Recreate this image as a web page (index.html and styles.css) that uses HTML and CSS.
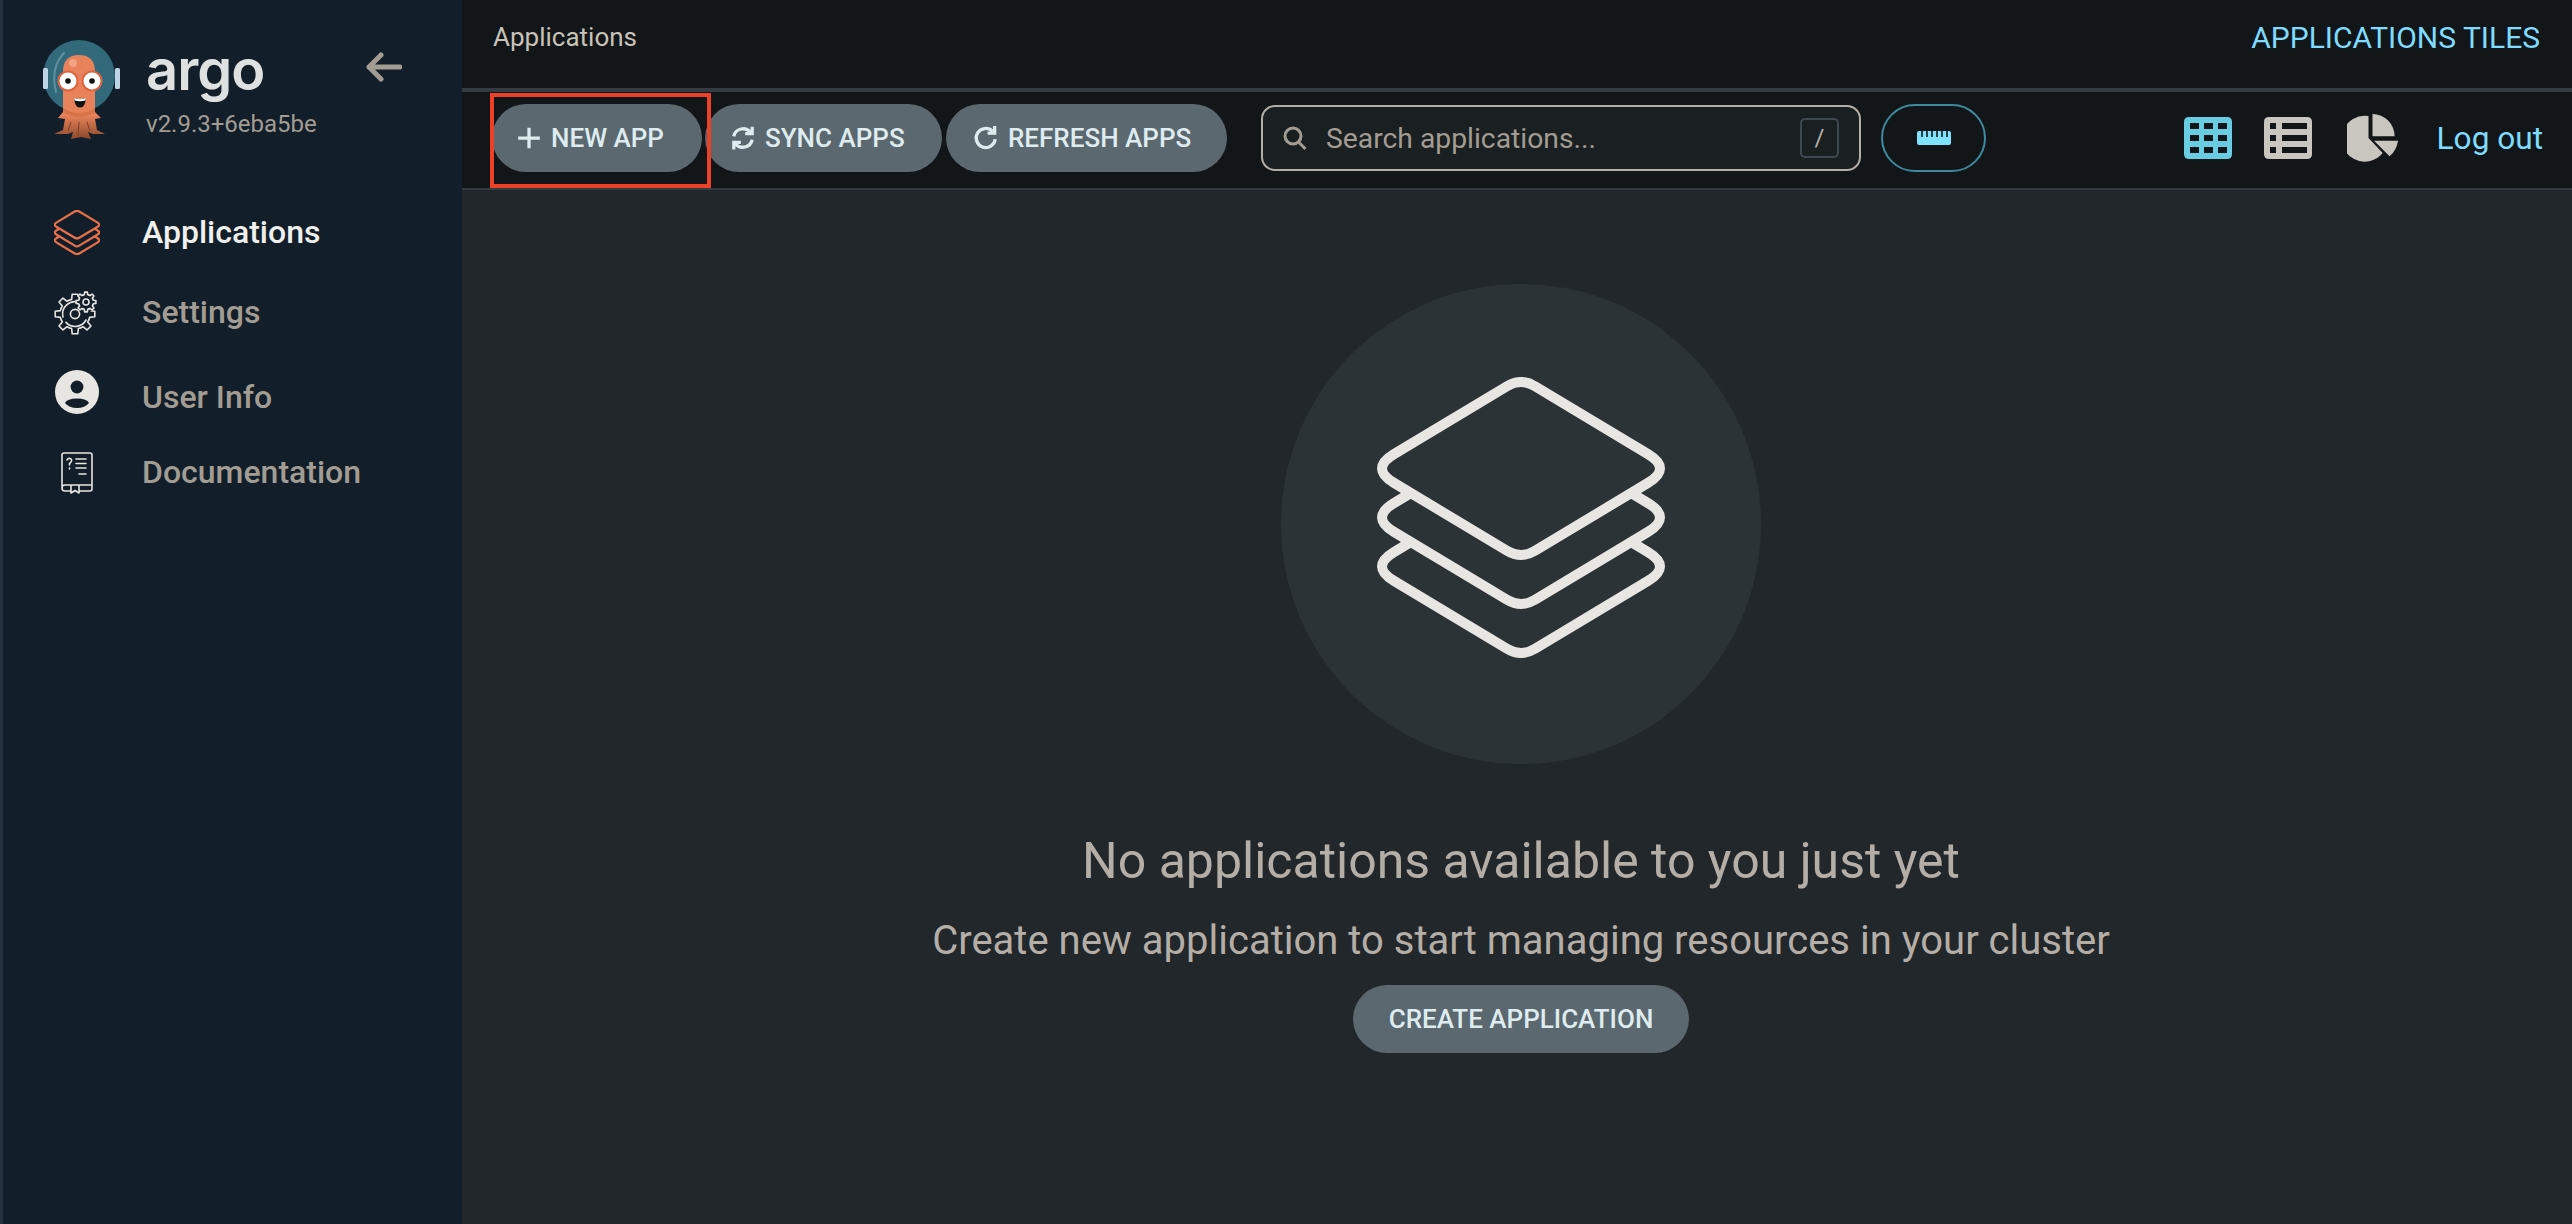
FILE: index.html
```html
<!DOCTYPE html>
<html>
    <head>
        <title>Applications</title>
        <link rel="stylesheet" href="styles.css">
    </head>
    <body>
        <svg class="defs" width="0" height="0">
            <symbol id="stack" viewBox="0 0 288 281" overflow="visible">
                <path d="M130 9.200Q144 .8 158 9.200L271 77.100Q295 91.500 271 105.900L158 173.800Q144 182.200 130 173.800L17 105.900Q-7 91.500 17 77.100Z"/>
                <path d="M34 115.900L17 126.100Q-7 140.500 17 154.900L130 222.800Q144 231.200 158 222.800L271 154.900Q295 140.500 271 126.100L254 115.900"/>
                <path d="M34 164.900L17 175.100Q-7 189.500 17 203.900L130 271.800Q144 280.200 158 271.800L271 203.900Q295 189.500 271 175.100L254 164.900"/>
            </symbol>
            <g id="gear-tooth">
                <path d="M-5.74 -13.86L-3.37 -14.6L-2.78 -19.8L2.78 -19.8L3.37 -14.6L5.74 -13.86"/>
            </g>
            <g id="gear-ring">
                <use href="#gear-tooth"/>
                <use href="#gear-tooth" transform="rotate(45)"/>
                <use href="#gear-tooth" transform="rotate(90)"/>
                <use href="#gear-tooth" transform="rotate(135)"/>
                <use href="#gear-tooth" transform="rotate(180)"/>
                <use href="#gear-tooth" transform="rotate(225)"/>
                <use href="#gear-tooth" transform="rotate(270)"/>
                <use href="#gear-tooth" transform="rotate(315)"/>
            </g>
            <linearGradient id="tentacle" x1="0" y1="0" x2="0" y2="1">
                <stop offset="0.72" stop-color="#e8825a"/>
                <stop offset="1" stop-color="#8a4a2c"/>
            </linearGradient>
        </svg>

        <div class="sidebar">
            <div class="brand">
                <svg class="logo" viewBox="0 0 80 102">
                    <circle cx="38" cy="36" r="36" fill="#326a7c"/>
                    <path d="M23 13Q9 28 15 52" fill="none" stroke="#5f8f9e" stroke-width="2" stroke-linecap="round"/>
                    <rect x="2" y="28" width="5" height="21" rx="1.500" fill="#bcd3e8"/>
                    <rect x="74" y="28" width="5" height="21" rx="1.500" fill="#bcd3e8"/>
                    <path d="M22 72V32Q22 15 38 15Q54 15 54 32V72L60 78L54 79L56 90L64 94L52 94L47 92L50 99L40 97L30 99L32 92L27 94L13 94L22 90L24 79L17 78Z" fill="url(#tentacle)"/>
                    <path d="M22 68Q38 78 54 68V72Q38 82 22 72Z" fill="#d87248"/>
                    <path d="M30 82L27 91M38 82L37 96M46 82L49 91" fill="none" stroke="#7d4026" stroke-width="1"/>
                    <circle cx="32" cy="23" r="4" fill="#f0a283"/>
                    <circle cx="27" cy="41" r="10.500" fill="#e0623e"/>
                    <circle cx="51" cy="41" r="10.500" fill="#e0623e"/>
                    <circle cx="27" cy="41" r="8.500" fill="#fff"/>
                    <circle cx="51" cy="41" r="8.500" fill="#fff"/>
                    <circle cx="27" cy="41" r="2.800" fill="#111"/>
                    <circle cx="51" cy="41" r="2.800" fill="#111"/>
                    <path d="M33 58Q39 60 45 58Q44 68 39 67.500Q34 68 33 58Z" fill="#111"/>
                    <path d="M33 58Q39 60 45 58L44.400 60.500Q39 62 33.600 60.500Z" fill="#fff"/>
                </svg>
                <div class="brand-text">
                    <div class="wordmark">argo</div>
                    <div class="version">v2.9.3+6eba5be</div>
                </div>
                <svg class="collapse" viewBox="0 0 36 30">
                    <path d="M34 15H3M15 3L3 15L15 27"/>
                </svg>
            </div>
            <div class="nav">
                <div class="nav-item nav-active">
                    <span class="nav-icon"><svg class="stack-small"><use href="#stack"/></svg></span>
                    <span>Applications</span>
                </div>
                <div class="nav-item nav-settings">
                    <span class="nav-icon">
                        <svg class="gear" viewBox="0 0 48 46">
                            <g transform="translate(22 25)">
                                <use href="#gear-ring"/>
                                <path d="M-12 3A12.300 12.300 0 0 1 4 -11.600"/>
                                <path d="M11 6A12.300 12.300 0 0 1 -9 8.400"/>
                                <circle r="4.600"/>
                            </g>
                            <circle class="gear-cut" cx="33" cy="13" r="10.500"/>
                            <g transform="translate(33 13) scale(0.5)">
                                <use href="#gear-ring" stroke-width="3.200"/>
                            </g>
                            <circle cx="33" cy="13" r="3"/>
                        </svg>
                    </span>
                    <span>Settings</span>
                </div>
                <div class="nav-item nav-user">
                    <span class="nav-icon user-icon">
                        <svg width="44" height="44" viewBox="0 0 44 44">
                            <circle cx="22" cy="22" r="22" fill="#e8e6e2"/>
                            <circle cx="22" cy="17" r="6.400" fill="#121f2a"/>
                            <path d="M10 33Q12 28.500 22 28.500Q32 28.500 34 33Q30 38 22 38Q14 38 10 33Z" fill="#121f2a"/>
                        </svg>
                    </span>
                    <span>User Info</span>
                </div>
                <div class="nav-item nav-docs">
                    <span class="nav-icon">
                        <svg class="doc" viewBox="0 0 32 42">
                            <path d="M1 36V3Q1 1 3 1H29Q31 1 31 3V37Q31 39 29 39H18M9 39H4Q1 39 1 36Q1 33 4 33H31M18 33V41L14 38.500L10 41V33"/>
                            <path d="M6 8Q7 6 9 6.500Q11 7 10.500 9Q10 10.500 8.500 11.500V13M8.500 16V17M15 7H25M15 11.500H25M15 16H25M18 22H25"/>
                        </svg>
                    </span>
                    <span>Documentation</span>
                </div>
            </div>
        </div>

        <div class="main">
            <div class="topbar">
                <div class="page-title">Applications</div>
                <div class="page-tools">APPLICATIONS TILES</div>
            </div>
            <div class="toolbar">
                <div class="highlight"></div>
                <button class="btn btn-new">
                    <svg class="btn-icon" viewBox="0 0 24 24"><path d="M12 2.500V21.500M2 12H22"/></svg>
                    NEW APP
                </button>
                <button class="btn btn-sync">
                    <svg class="btn-icon" viewBox="0 0 24 24"><path d="M3.500 10.500A8.700 8.700 0 0 1 19 7M20.500 1.500V8H14M20.500 13.500A8.700 8.700 0 0 1 5 17M3.500 22.500V16H10"/></svg>
                    SYNC APPS
                </button>
                <button class="btn btn-refresh">
                    <svg class="btn-icon" viewBox="0 0 24 24"><path d="M20.500 13A8.800 8.800 0 1 1 18 5.800M20 1V7.500H13.500"/></svg>
                    REFRESH APPS
                </button>
                <div class="search">
                    <svg class="search-icon" viewBox="0 0 24 24"><circle cx="10" cy="10" r="8"/><path d="M15.500 16L22.500 23"/></svg>
                    <input class="search-input" placeholder="Search applications...">
                    <span class="search-key">/</span>
                </div>
                <button class="filter-btn">
                    <svg width="34" height="16" viewBox="0 0 34 16">
                        <rect y="1" width="34" height="14" rx="2" fill="#7fe3ff"/>
                        <path d="M5 0V7M10 0V7M15 0V7M20 0V7M25 0V7M30 0V7" stroke="#121619" stroke-width="1.600"/>
                    </svg>
                </button>
                <div class="toolbar-right">
                    <svg class="view-icon view-on" width="48" height="42" viewBox="0 0 48 42">
                        <path fill-rule="evenodd" d="M5 0H43Q48 0 48 5V37Q48 42 43 42H5Q0 42 0 37V5Q0 0 5 0ZM6 6V12H15V6ZM20 6V12H29V6ZM34 6V12H43V6ZM6 18V24H15V18ZM20 18V24H29V18ZM34 18V24H43V18ZM6 30V36H15V30ZM20 30V36H29V30ZM34 30V36H43V30Z"/>
                    </svg>
                    <svg class="view-icon" width="48" height="42" viewBox="0 0 48 42">
                        <path fill-rule="evenodd" d="M5 0H43Q48 0 48 5V37Q48 42 43 42H5Q0 42 0 37V5Q0 0 5 0ZM6 6V12H12V6ZM18 6V12H43V6ZM6 18V24H12V18ZM18 18V24H43V18ZM6 30V36H12V30ZM18 30V36H43V30Z"/>
                    </svg>
                    <svg class="view-icon pie-icon" width="52" height="50" viewBox="0 0 52 50">
                        <path d="M21.500 3V25L35.700 40A23 23 0 1 1 21.500 3Z"/>
                        <path d="M25.500 1V23.300H47.600A22.300 22.300 0 0 0 25.500 1Z"/>
                        <path d="M27 27.700H51A24 24 0 0 1 42.500 43.300Z"/>
                    </svg>
                    <span class="logout">Log out</span>
                </div>
            </div>
            <div class="empty">
                <div class="empty-circle">
                    <svg class="stack-large"><use href="#stack"/></svg>
                </div>
                <div class="empty-title">No applications available to you just yet</div>
                <div class="empty-sub">Create new application to start managing resources in your cluster</div>
                <button class="btn btn-create">CREATE APPLICATION</button>
            </div>
        </div>
    </body>
</html>
```

FILE: styles.css
```css
* {
    box-sizing: border-box;
}
html, body {
    margin: 0;
    height: 100%;
}
body {
    display: flex;
    height: 1224px;
    overflow: hidden;
    font-family: Roboto, "Liberation Sans", sans-serif;
    background-color: #22272b;
}
.defs {
    position: absolute;
}

/* sidebar */
.sidebar {
    width: 462px;
    flex-shrink: 0;
    background-color: #121f2a;
    border-left: 3px solid #24323f;
}
.brand {
    display: flex;
    height: 190px;
    padding: 40px 0 0 38px;
}
.logo {
    width: 80px;
    height: 102px;
    flex-shrink: 0;
}
.brand-text {
    margin-left: 25px;
    width: 220px;
}
.wordmark {
    font-family: Inter, sans-serif;
    font-size: 56px;
    font-weight: 600;
    letter-spacing: -1px;
    line-height: 60px;
    color: #dfe1e1;
}
.version {
    margin-top: 9px;
    font-size: 24px;
    line-height: 30px;
    color: #a39c92;
}
.collapse {
    width: 36px;
    height: 30px;
    margin-top: 12px;
    fill: none;
    stroke: #a39c92;
    stroke-width: 5;
    stroke-linecap: round;
    stroke-linejoin: round;
}
.nav-item {
    display: flex;
    align-items: center;
    height: 80px;
    font-size: 32px;
    font-weight: 500;
    color: #a39c92;
}
.nav-active {
    color: #f0efec;
    margin-top: 2px;
}
.nav-settings {
    margin-top: 0;
}
.nav-user {
    margin-top: 5px;
}
.nav-docs {
    margin-top: -5px;
}
.nav-icon {
    display: flex;
    justify-content: center;
    width: 139px;
    padding-left: 9px;
}
.user-icon {
    margin-bottom: 10px;
}
.stack-small {
    width: 46px;
    height: 45px;
    fill: none;
    stroke: #e8704a;
    stroke-width: 14;
}
.gear {
    width: 48px;
    height: 46px;
    fill: none;
    stroke: #e8e6e2;
    stroke-width: 1.6;
    stroke-linejoin: round;
    stroke-linecap: round;
}
.gear-cut {
    fill: #121f2a;
    stroke: none;
}
.doc {
    width: 32px;
    height: 42px;
    margin-top: 2px;
    fill: none;
    stroke: #e8e6e2;
    stroke-width: 1.6;
    stroke-linecap: round;
    stroke-linejoin: round;
}

/* header rows */
.main {
    flex: 1;
    min-width: 0;
}
.topbar {
    display: flex;
    justify-content: space-between;
    align-items: center;
    height: 92px;
    padding: 0 32px 14px 31px;
    background-color: #121619;
    border-bottom: 4px solid #333c42;
}
.page-title {
    font-size: 26px;
    color: #c9c2b8;
}
.page-tools {
    font-size: 30px;
    color: #7fdcff;
}
.toolbar {
    position: relative;
    display: flex;
    height: 98px;
    padding: 12px 29px 0 30px;
    background-color: #121619;
    border-bottom: 2px solid #333c42;
}
.highlight {
    position: absolute;
    left: 28px;
    top: 1px;
    width: 221px;
    height: 95px;
    border: 4px solid #ec4126;
}
.btn {
    display: flex;
    align-items: center;
    height: 68px;
    border: none;
    border-radius: 34px;
    font-family: inherit;
    font-size: 26px;
    font-weight: 500;
    color: #dfecef;
    background-color: #5b6870;
}
.btn-icon {
    width: 26px;
    height: 26px;
    margin-right: 9px;
    fill: none;
    stroke: #dfecef;
    stroke-width: 3;
}
.btn-new {
    width: 210px;
    padding-left: 24px;
    margin-right: 3px;
}
.btn-sync {
    width: 237px;
    padding-left: 25px;
    margin-right: 4px;
}
.btn-refresh {
    width: 281px;
    padding-left: 27px;
    margin-right: 34px;
}
.search {
    display: flex;
    align-items: center;
    width: 600px;
    height: 66px;
    margin-top: 1px;
    margin-right: 20px;
    padding: 0 20px;
    background-color: #1a1f22;
    border: 2px solid #b5aea6;
    border-radius: 14px;
}
.search-icon {
    width: 24px;
    height: 24px;
    flex-shrink: 0;
    fill: none;
    stroke: #a39c92;
    stroke-width: 3;
}
.search-input {
    flex: 1;
    min-width: 0;
    margin-left: 19px;
    padding: 0;
    border: none;
    outline: none;
    font-family: inherit;
    font-size: 28.3px;
    color: #a39c92;
    background: transparent;
}
.search-input::placeholder {
    color: #a39c92;
    opacity: 1;
}
.search-key {
    width: 39px;
    height: 40px;
    border: 2px solid #3d4850;
    border-radius: 5px;
    font-size: 24px;
    line-height: 36px;
    text-align: center;
    color: #b5aea6;
}
.filter-btn {
    display: flex;
    align-items: center;
    justify-content: center;
    width: 105px;
    height: 68px;
    padding: 0;
    background: transparent;
    border: 2px solid #3d8a9f;
    border-radius: 34px;
}
.toolbar-right {
    display: flex;
    align-items: center;
    gap: 32px;
    height: 68px;
    margin-left: auto;
}
.view-icon {
    fill: #c9c6c0;
}
.view-on {
    fill: #68cde3;
}
.pie-icon {
    margin-left: 3px;
    margin-right: 6px;
}
.logout {
    font-size: 31.6px;
    color: #7fdcff;
}

/* empty state */
.empty {
    display: flex;
    flex-direction: column;
    align-items: center;
    padding: 94px 0 0 8px;
}
.empty-circle {
    display: flex;
    align-items: center;
    justify-content: center;
    width: 480px;
    height: 480px;
    border-radius: 50%;
    background-color: #2c3337;
}
.stack-large {
    width: 288px;
    height: 281px;
    margin-bottom: 14px;
    fill: none;
    stroke: #e8e6e2;
    stroke-width: 10;
}
.empty-title {
    margin-top: 69px;
    font-size: 50px;
    line-height: 56px;
    color: #b5aea6;
}
.empty-sub {
    margin-top: 30px;
    font-size: 40px;
    line-height: 44px;
    color: #b5aea6;
}
.btn-create {
    margin-top: 22px;
    padding: 0 36px;
}
```
